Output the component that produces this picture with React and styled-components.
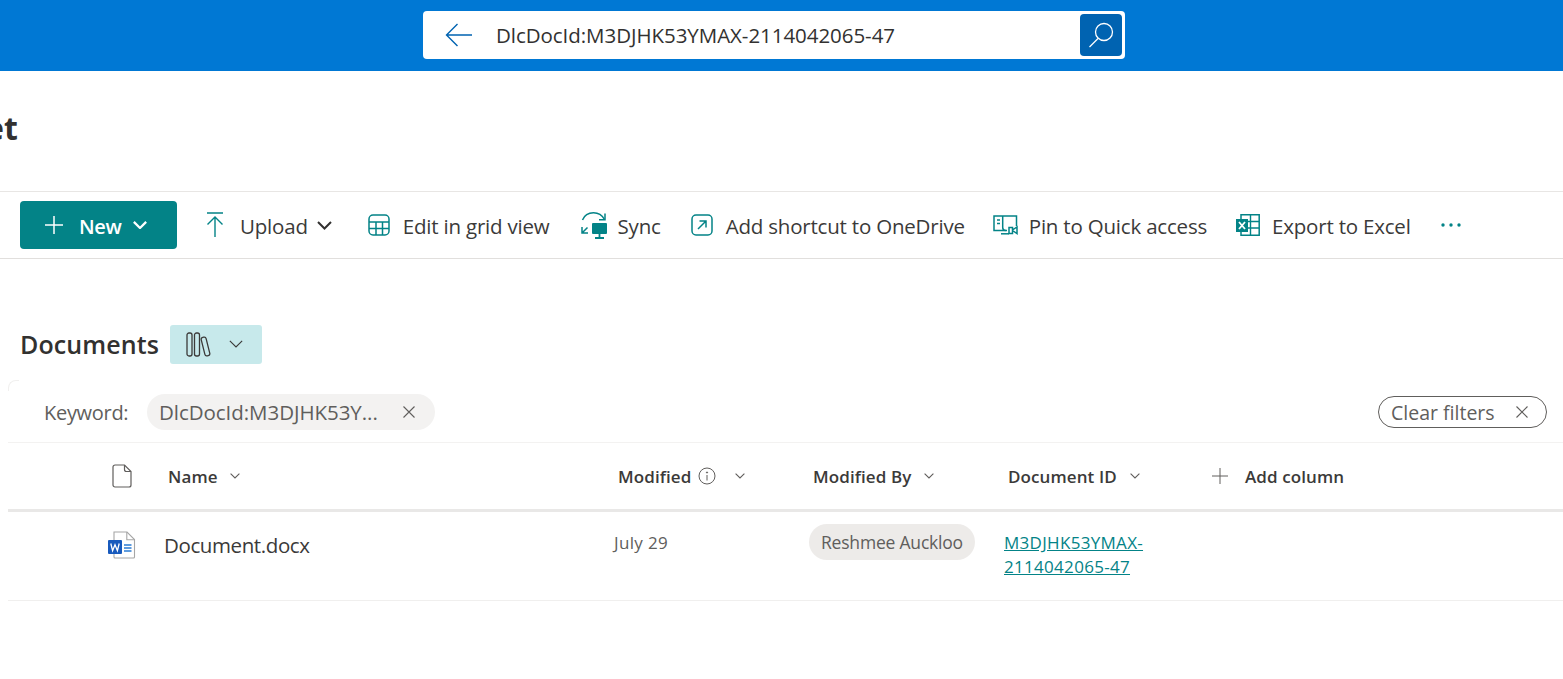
import styled, { createGlobalStyle } from 'styled-components';

const GlobalStyle = createGlobalStyle`
  html, body {
    margin: 0;
    padding: 0;
    background: #fff;
    overflow: hidden;
  }
  body {
    font-family: "Open Sans", "Noto Sans", "Liberation Sans", sans-serif;
    color: #323130;
  }
`;

const Page = styled.div`
  width: 1563px;
  height: 679px;
  overflow: hidden;
  display: flex;
  flex-direction: column;
`;

// top blue bar
const TopBar = styled.header`
  height: 71px;
  background: #0078d4;
  display: flex;
  padding: 11px 0 0 423px;
  box-sizing: border-box;
`;

const SearchBox = styled.div`
  width: 702px;
  height: 48px;
  background: #fff;
  border-radius: 4px;
  display: flex;
  align-items: center;
  padding: 0 3px 0 22px;
  box-sizing: border-box;
`;

const SearchText = styled.span`
  flex: 1;
  margin-left: 23px;
  font-size: 20.5px;
  letter-spacing: -0.05px;
  color: #323130;
`;

const SearchButton = styled.button`
  width: 42px;
  height: 42px;
  border: 0;
  padding: 0;
  border-radius: 4px;
  background: #0063b1;
  display: flex;
  align-items: center;
  justify-content: center;
`;

const TitleRow = styled.div`
  height: 120px;
  display: flex;
  align-items: flex-start;
  overflow: hidden;
`;

const SiteTitle = styled.h1`
  margin: 34px 0 0 -15px;
  font-size: 32px;
  line-height: 46px;
  font-weight: 700;
  color: #323130;
`;

const Toolbar = styled.div`
  height: 68px;
  box-sizing: border-box;
  border-top: 1px solid #e8e6e4;
  border-bottom: 1px solid #e1dfdd;
  display: flex;
  align-items: center;
  padding-left: 20px;
`;

const NewButton = styled.button`
  width: 157px;
  height: 48px;
  border: 0;
  border-radius: 4px;
  background: #038387;
  color: #fff;
  font-family: inherit;
  font-size: 20px;
  font-weight: 600;
  letter-spacing: -0.3px;
  display: flex;
  align-items: center;
  padding: 0 0 0 25px;
  box-sizing: border-box;
  gap: 10px;
`;

const NewLabel = styled.span`
  margin: 2px 1px 0 6px;
`;

const ToolItem = styled.div`
  display: flex;
  align-items: center;
  margin-left: ${(p) => p.$left}px;
  font-size: 20.5px;
  letter-spacing: -0.2px;
  color: #3b3a39;
  white-space: nowrap;
`;

const ToolIcon = styled.span`
  display: flex;
  width: ${(p) => p.$w}px;
  justify-content: center;
  margin-right: ${(p) => p.$gap}px;
`;

const ToolLabel = styled.span`
  margin-top: 2px;
`;

const LibraryRow = styled.div`
  display: flex;
  align-items: center;
  height: 39px;
  margin-top: 66px;
  padding-left: 20px;
`;

const LibraryTitle = styled.h2`
  margin: -2px 0 0 0;
  font-size: 25px;
  font-weight: 600;
  letter-spacing: 0.1px;
  color: #323130;
`;

const ViewSwitch = styled.button`
  width: 92px;
  height: 39px;
  margin-left: 11px;
  border: 0;
  border-radius: 3px;
  background: #c7e9eb;
  display: flex;
  align-items: center;
  padding: 0 0 0 16px;
  gap: 18px;
  box-sizing: border-box;
`;

const ListPanel = styled.section`
  position: relative;
  margin: 16px 0 0 8px;

  &::before {
    content: '';
    position: absolute;
    top: 0;
    left: 0;
    width: 10px;
    height: 10px;
    border-top: 1px solid #f1f0ef;
    border-left: 1px solid #f1f0ef;
    border-top-left-radius: 8px;
  }
`;

const FilterRow = styled.div`
  height: 63px;
  box-sizing: border-box;
  border-bottom: 1px solid #f3f2f1;
  display: flex;
  align-items: flex-start;
  padding: 14px 16px 0 36px;
`;

const FilterLabel = styled.span`
  font-size: 20px;
  letter-spacing: -0.3px;
  color: #605e5c;
  margin-top: 5px;
  width: 103px;
`;

const FilterChip = styled.div`
  width: 288px;
  height: 36px;
  border-radius: 18px;
  background: #f3f2f1;
  display: flex;
  align-items: center;
  justify-content: space-between;
  padding: 0 20px 0 12px;
  box-sizing: border-box;
  font-size: 20.5px;
  letter-spacing: -0.05px;
  color: #605e5c;
`;

const ClearButton = styled.div`
  margin-left: auto;
  margin-top: 2px;
  width: 169px;
  height: 32px;
  border: 1px solid #605e5c;
  border-radius: 16px;
  display: flex;
  align-items: center;
  justify-content: space-between;
  padding: 0 18px 0 12px;
  box-sizing: border-box;
  font-size: 19.5px;
  letter-spacing: 0;
  color: #605e5c;
`;

const HeaderRow = styled.div`
  height: 69px;
  box-sizing: border-box;
  border-bottom: 3px solid #e9e8e7;
  display: grid;
  grid-template-columns: 104px 56px 450px 195px 195px 204px 1fr;
  align-items: center;
`;

const HeaderCell = styled.div`
  display: flex;
  align-items: center;
  gap: ${(p) => p.$gap || 10}px;
  font-size: 17px;
  font-weight: 600;
  letter-spacing: 0.1px;
  color: #3b3a39;
  white-space: nowrap;
`;

const FileRow = styled.div`
  height: 89px;
  box-sizing: border-box;
  border-bottom: 1px solid #f0efee;
  display: grid;
  grid-template-columns: 100px 56px 450px 195px 195px 1fr;
  align-items: start;
`;

const FileIconCell = styled.div`
  padding-top: 19px;
`;

const FileName = styled.div`
  margin-top: 19px;
  font-size: 20.5px;
  letter-spacing: -0.4px;
  color: #3b3a39;
`;

const ModifiedDate = styled.div`
  margin-top: 19px;
  font-size: 17px;
  letter-spacing: 0.35px;
  color: #605e5c;
`;

const PersonChip = styled.div`
  display: inline-block;
  margin-top: 12px;
  height: 36px;
  line-height: 36px;
  border-radius: 18px;
  background: #edebe9;
  padding: 0 12px;
  font-size: 17.5px;
  letter-spacing: -0.2px;
  color: #605e5c;
  white-space: nowrap;
`;

const DocLink = styled.a`
  display: block;
  width: 160px;
  margin-top: 19px;
  font-size: 17px;
  line-height: 24px;
  letter-spacing: 0.3px;
  color: #038387;
  text-decoration: underline;
`;

const Chevron = ({ size = 10, color = '#605e5c', width = 1.1 }) => (
  <svg width={size} height={size * 0.6} viewBox="0 0 10 6" fill="none">
    <path d="M.6.6 5 5 9.4.6" stroke={color} strokeWidth={width} />
  </svg>
);

const Cross = ({ size = 12, color = '#605e5c' }) => (
  <svg width={size} height={size} viewBox="0 0 12 12" fill="none">
    <path d="M.5.5l11 11M11.5.5l-11 11" stroke={color} strokeWidth="1.1" />
  </svg>
);

const teal = '#038387';

const UploadIcon = () => (
  <svg width="22" height="26" viewBox="0 0 22 26" fill="none" stroke={teal} strokeWidth="1.4">
    <path d="M3 1h16M11 25V5M3.500 12.500 11 5l7.500 7.500" />
  </svg>
);

const GridIcon = () => (
  <svg width="22" height="22" viewBox="0 0 22 22" fill="none" stroke={teal} strokeWidth="1.5">
    <rect x="1" y="1" width="20" height="20" rx="4" />
    <path d="M1 8h20M1 14.500h20M8 8v13M14.500 8v13" />
  </svg>
);

const SyncIcon = () => (
  <svg width="26" height="27" viewBox="0 0 26 27" fill="none" stroke={teal} strokeWidth="1.5">
    <path d="M1.500 8C3.500 3 8 .8 12.500.8c4.500 0 8.500 2.200 11 6.700" />
    <path d="M24 1.500V7.800h-6" />
    <path d="M1 15v6h6M1 21l5.500-5.500" />
    <rect x="11" y="11" width="15" height="11" rx="1" fill={teal} stroke="none" />
    <path d="M14 26h9M18.500 22v4" strokeWidth="1.800" />
  </svg>
);

const ShortcutIcon = () => (
  <svg width="22" height="22" viewBox="0 0 22 22" fill="none" stroke={teal} strokeWidth="1.5">
    <rect x="1" y="1" width="20" height="20" rx="4" />
    <path d="M7 15 15 7M8.500 7H15v6.500" />
  </svg>
);

const PinIcon = () => (
  <svg width="25" height="20" viewBox="0 0 25 20" fill="none" stroke={teal} strokeWidth="1.5">
    <path d="M14 15.500H1V1h22.500v10" />
    <path d="M4 5h3M4 8.500h3M9.700 1v11.500c0 2 1 3 3 3" />
    <path d="M16 12.500h3.500v6H16zM19.500 15l4.500-3v6.500l-4.500-3" />
    <path d="M8 18.800h8" />
  </svg>
);

const ExcelIcon = () => (
  <svg width="24" height="22" viewBox="0 0 24 22" fill="none">
    <path d="M5 .8h18.200v20.400H5z" stroke={teal} strokeWidth="1.500" />
    <path d="M14.500 1v20M5 7.500h18M5 14h18" stroke={teal} strokeWidth="1.400" />
    <rect x="0" y="5" width="12" height="13" fill={teal} />
    <path d="M3 8l6 7M9 8l-6 7" stroke="#fff" strokeWidth="1.800" />
  </svg>
);

const MoreIcon = () => (
  <svg width="20" height="4" viewBox="0 0 20 4" fill={teal}>
    <circle cx="2" cy="2" r="1.700" />
    <circle cx="10" cy="2" r="1.700" />
    <circle cx="18" cy="2" r="1.700" />
  </svg>
);

const WordIcon = () => (
  <svg width="28" height="28" viewBox="0 0 28 28" fill="none">
    <path d="M6 1h13l7.500 7.500V26a1 1 0 0 1-1 1H7a1 1 0 0 1-1-1z" fill="#fff" stroke="#a6a6a6" strokeWidth="1.100" />
    <path d="M18.800 1v7.700h7.700" stroke="#a6a6a6" strokeWidth="1.100" />
    <path d="M16 14h7.500M16 17h7.500M16 20h7.500" stroke="#2b7cd3" strokeWidth="1.300" />
    <rect x="0" y="9" width="14" height="14" rx="1" fill="#185abd" />
    <path d="M2.800 12.500l1.800 7.200 2.400-6 2.400 6 1.800-7.200" stroke="#fff" strokeWidth="1.300" />
  </svg>
);

const BlankFileIcon = () => (
  <svg width="20" height="24" viewBox="0 0 20 24" fill="none" stroke="#605e5c" strokeWidth="1.200">
    <path d="M1 3a2 2 0 0 1 2-2h9.500L19 7.500V21a2 2 0 0 1-2 2H3a2 2 0 0 1-2-2z" />
    <path d="M12.500 1v4.500a2 2 0 0 0 2 2H19" />
  </svg>
);

const BooksIcon = () => (
  <svg width="25" height="25" viewBox="0 0 25 25" fill="none" stroke="#3b3a39" strokeWidth="1.300">
    <rect x="1" y="1" width="5" height="23" rx="2" />
    <rect x="8.500" y="1" width="5" height="23" rx="2" />
    <rect x="17" y="5" width="5" height="19" rx="2" transform="rotate(-14 19.500 14.500)" />
  </svg>
);

const InfoIcon = () => (
  <svg width="18" height="18" viewBox="0 0 18 18" fill="none" stroke="#605e5c" strokeWidth="1">
    <circle cx="9" cy="9" r="8" />
    <path d="M9 8v5.500" />
    <circle cx="9" cy="5.500" r=".6" fill="#605e5c" />
  </svg>
);

const tools = [
  { label: 'Edit in grid view', icon: <GridIcon />, left: 36, w: 22, gap: 13 },
  { label: 'Sync', icon: <SyncIcon />, left: 31, w: 26, gap: 11 },
  { label: 'Add shortcut to OneDrive', icon: <ShortcutIcon />, left: 30, w: 22, gap: 13 },
  { label: 'Pin to Quick access', icon: <PinIcon />, left: 28, w: 25, gap: 11 },
  { label: 'Export to Excel', icon: <ExcelIcon />, left: 29, w: 24, gap: 12 },
];

const App = () => (
  <Page>
    <GlobalStyle />
    <TopBar>
      <SearchBox>
        <svg width="28" height="24" viewBox="0 0 28 24" fill="none" stroke="#0063b1" strokeWidth="1.400">
          <path d="M27 12H1.500M12.500 1 1.500 12l11 11" />
        </svg>
        <SearchText>DlcDocId:M3DJHK53YMAX-2114042065-47</SearchText>
        <SearchButton aria-label="Search">
          <svg width="26" height="26" viewBox="0 0 26 26" fill="none" stroke="#fff" strokeWidth="1.300">
            <circle cx="16" cy="10" r="8.500" />
            <path d="M10 16.500 1.500 25" />
          </svg>
        </SearchButton>
      </SearchBox>
    </TopBar>

    <TitleRow>
      <SiteTitle>et</SiteTitle>
    </TitleRow>

    <Toolbar>
      <NewButton>
        <svg width="18" height="18" viewBox="0 0 18 18" stroke="#fff" strokeWidth="1.500">
          <path d="M9 0v18M0 9h18" />
        </svg>
        <NewLabel>New</NewLabel>
        <Chevron size={14} color="#fff" width={1.6} />
      </NewButton>
      <ToolItem $left={27}>
        <ToolIcon $w={22} $gap={14}><UploadIcon /></ToolIcon>
        <ToolLabel>Upload</ToolLabel>
        <svg width="15" height="9" viewBox="0 0 15 9" fill="none" style={{ marginLeft: 9 }}>
          <path d="M1 1l6.500 6.500L14 1" stroke="#323130" strokeWidth="2" />
        </svg>
      </ToolItem>
      {tools.map((t) => (
        <ToolItem key={t.label} $left={t.left}>
          <ToolIcon $w={t.w} $gap={t.gap}>{t.icon}</ToolIcon>
          <ToolLabel>{t.label}</ToolLabel>
        </ToolItem>
      ))}
      <ToolItem $left={30}><MoreIcon /></ToolItem>
    </Toolbar>

    <LibraryRow>
      <LibraryTitle>Documents</LibraryTitle>
      <ViewSwitch aria-label="Switch view">
        <BooksIcon />
        <Chevron size={14} color="#3b3a39" width={0.8} />
      </ViewSwitch>
    </LibraryRow>

    <ListPanel>
      <FilterRow>
        <FilterLabel>Keyword:</FilterLabel>
        <FilterChip>
          DlcDocId:M3DJHK53Y...
          <Cross />
        </FilterChip>
        <ClearButton>
          Clear filters
          <Cross />
        </ClearButton>
      </FilterRow>

      <HeaderRow>
        <span />
        <BlankFileIcon />
        <HeaderCell $gap={12}>Name <Chevron /></HeaderCell>
        <HeaderCell $gap={7}>
          Modified <InfoIcon />
          <span style={{ width: 5 }} />
          <Chevron />
        </HeaderCell>
        <HeaderCell $gap={13}>Modified By <Chevron /></HeaderCell>
        <HeaderCell $gap={13}>Document ID <Chevron /></HeaderCell>
        <HeaderCell $gap={17}>
          <svg width="16" height="16" viewBox="0 0 16 16" stroke="#605e5c" strokeWidth="1">
            <path d="M8 0v16M0 8h16" />
          </svg>
          Add column
        </HeaderCell>
      </HeaderRow>

      <FileRow>
        <span />
        <FileIconCell><WordIcon /></FileIconCell>
        <FileName>Document.docx</FileName>
        <ModifiedDate>July 29</ModifiedDate>
        <div><PersonChip>Reshmee Auckloo</PersonChip></div>
        <DocLink href="#">M3DJHK53YMAX-2114042065-47</DocLink>
      </FileRow>
    </ListPanel>
  </Page>
);

export default App;
